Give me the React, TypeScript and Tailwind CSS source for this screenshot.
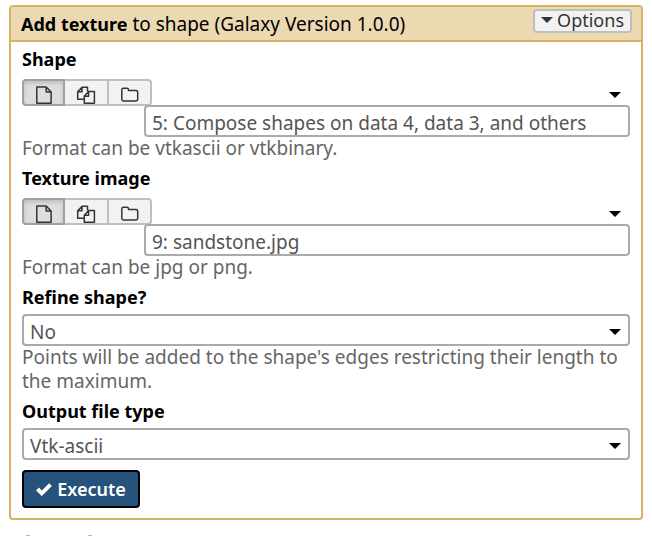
import type { ReactNode } from "react";

function Caret({ className = "" }: { className?: string }) {
  return (
    <svg aria-hidden="true" viewBox="0 0 12 6" className={`h-[6px] w-[12px] fill-current ${className}`}>
      <path d="M0 0h12L6 6z" />
    </svg>
  );
}

function Icon({ children }: { children: ReactNode }) {
  return (
    <svg
      aria-hidden="true"
      viewBox="0 0 20 20"
      className="mt-[3px] h-5 w-5 shrink-0"
      fill="none"
      stroke="#333"
      strokeWidth="1.5"
      strokeLinejoin="round"
    >
      {children}
    </svg>
  );
}

function SourceButtons() {
  const base = "flex h-full justify-center overflow-hidden border-2";
  return (
    <div role="group" aria-label="Input source" className="flex h-[27px] w-[130px] shrink-0">
      <button
        type="button"
        aria-label="Single dataset"
        aria-pressed="true"
        className={`${base} w-[43px] rounded-l border-[#a0a0a0] bg-[#dedede] shadow-[inset_0_2px_4px_#bdbdbd]`}
      >
        <Icon>
          <path d="M2.8 3h9.4l4.9 5v11.2H2.8zM12.2 3v5h4.9" />
        </Icon>
      </button>
      <button
        type="button"
        aria-label="Multiple datasets"
        className={`${base} w-[44px] border-l-0 border-[#bfbfbf] bg-[#f2f2f2]`}
      >
        <Icon>
          <path d="M8.3 15.2H1.7V7.7L6 3.2h5.5v4.1M6 3.2v4.5H1.7M8.3 12.2l4.3-4.6h5.8v11.6H8.3zM12.6 7.6v4.6H8.3" />
        </Icon>
      </button>
      <button
        type="button"
        aria-label="Dataset collection"
        className={`${base} w-[43px] rounded-r border-l-0 border-[#bfbfbf] bg-[#f2f2f2]`}
      >
        <Icon>
          <path d="M1.8 5.9Q1.8 4.3 3.4 4.3H7q1.5 0 1.5 1.5v.7H16q1.7 0 1.7 1.7v7q0 1.7-1.7 1.7H3.4q-1.6 0-1.6-1.7z" />
        </Icon>
      </button>
    </div>
  );
}

const selectStyle =
  "block h-8 w-full appearance-none rounded border-2 border-[#aaa] bg-white px-[6px] pt-[4px] text-[19px] leading-6 text-[#555]";
const labelStyle = "block text-[18px] leading-6 font-bold text-black";
const helpStyle = "-mt-px leading-6 text-[#666]";

function DataField({ id, label, value, help }: { id: string; label: string; value: string; help: string }) {
  return (
    <div className="mb-[6px]">
      <label htmlFor={id} className={labelStyle}>
        {label}
      </label>
      <div className="mt-2 flex items-start">
        <SourceButtons />
        <div className="z-10 -ml-2 min-w-0 flex-1">
          <div className="flex h-[26px] justify-end pt-[13px] pr-[9px] text-black">
            <Caret />
          </div>
          <select id={id} className={selectStyle}>
            <option>{value}</option>
          </select>
        </div>
      </div>
      <p className={helpStyle}>{help}</p>
    </div>
  );
}

function SelectField({ id, label, value, help }: { id: string; label: string; value: string; help?: string }) {
  return (
    <div className="mb-[6px]">
      <label htmlFor={id} className={labelStyle}>
        {label}
      </label>
      <div className="mt-[5px] grid items-center">
        <select id={id} className={`${selectStyle} col-start-1 row-start-1`}>
          <option>{value}</option>
        </select>
        <Caret className="pointer-events-none col-start-1 row-start-1 mt-1 mr-[9px] justify-self-end text-black" />
      </div>
      {help && <p className={helpStyle}>{help}</p>}
    </div>
  );
}

export default function App() {
  return (
    <main className="bg-white px-[9px] pt-[5px] font-['Noto_Sans',sans-serif] text-[19px]">
      <form className="rounded border-2 border-[#d8b365]" onSubmit={(e) => e.preventDefault()}>
        <header className="flex h-[35px] items-start justify-between border-b-2 border-[#d8b365] bg-[#ebd9b2] pr-[9px] pl-[10px] text-black">
          <h1 className="pt-[5px] leading-6">
            <b className="text-[18px]">Add texture</b> to shape (Galaxy Version 1.0.0)
          </h1>
          <button
            type="button"
            className="mt-[2px] flex h-6 items-center gap-1 rounded border-2 border-[#bfbfbf] bg-[#f2f2f2] px-[6px] pb-[3px] text-[18px] leading-5 text-[#333]"
          >
            <Caret />
            Options
          </button>
        </header>
        <div className="px-[11px] pt-[5px] pb-[10px]">
          <DataField
            id="shape"
            label="Shape"
            value="5: Compose shapes on data 4, data 3, and others"
            help="Format can be vtkascii or vtkbinary."
          />
          <DataField id="texture" label="Texture image" value="9: sandstone.jpg" help="Format can be jpg or png." />
          <SelectField
            id="refine"
            label="Refine shape?"
            value="No"
            help="Points will be added to the shape's edges restricting their length to the maximum."
          />
          <SelectField id="output" label="Output file type" value="Vtk-ascii" />
          <button
            type="submit"
            className="mt-[10px] flex h-[38px] w-[118px] items-center justify-center gap-[5px] rounded border-2 border-black bg-[#25537b] text-[18px] leading-6 font-semibold text-white"
          >
            <svg aria-hidden="true" viewBox="0 0 16 13" className="h-[13px] w-4" fill="none" stroke="currentColor" strokeWidth="4">
              <path d="M1.5 6l4.3 4.3L14.5 1.7" />
            </svg>
            Execute
          </button>
        </div>
      </form>
      <div aria-hidden="true" className="mt-[15px] flex h-px gap-[58px] pl-[17px]">
        <span className="w-1 bg-[#bbb]" />
        <span className="w-1 bg-[#bbb]" />
      </div>
    </main>
  );
}
